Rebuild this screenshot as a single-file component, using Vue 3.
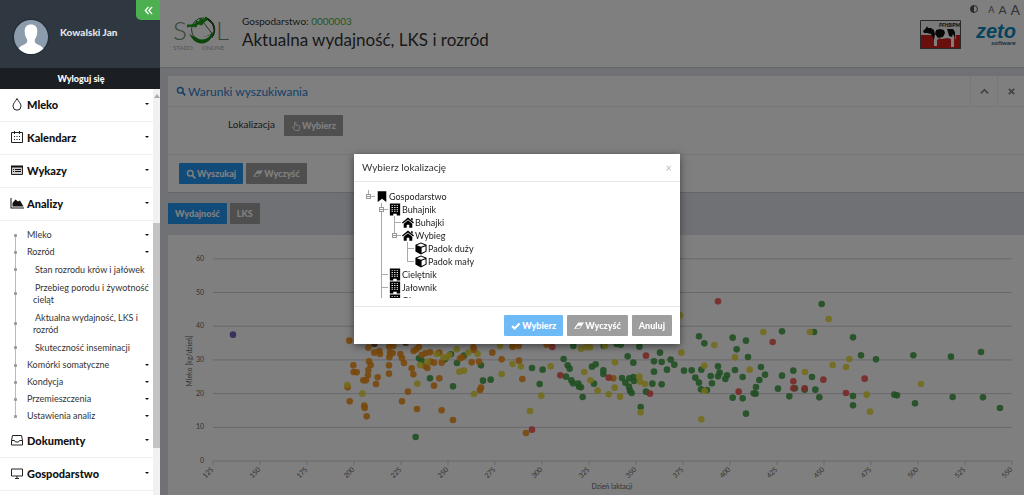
<script setup>
import { ref } from 'vue'

const mainMenu = [
  { label: 'Mleko', icon: 'drop' },
  { label: 'Kalendarz', icon: 'calendar' },
  { label: 'Wykazy', icon: 'list' },
  { label: 'Analizy', icon: 'area' }
]
const bottomMenu = [
  { label: 'Dokumenty', icon: 'inbox' },
  { label: 'Gospodarstwo', icon: 'screen' }
]
const subMenu = [
  { label: 'Mleko', caret: true },
  { label: 'Rozród', caret: true },
  { label: 'Stan rozrodu krów i jałówek', deep: true },
  { label: 'Przebieg porodu i żywotność cieląt', deep: true },
  { label: 'Aktualna wydajność, LKS i rozród', deep: true },
  { label: 'Skuteczność inseminacji', deep: true },
  { label: 'Komórki somatyczne', caret: true },
  { label: 'Kondycja', caret: true },
  { label: 'Przemieszczenia', caret: true },
  { label: 'Ustawienia analiz', caret: true }
]

const tree = [{
  label: 'Gospodarstwo', icon: 'bookmark', children: [
    { label: 'Buhajnik', icon: 'building', children: [
      { label: 'Buhajki', icon: 'home' },
      { label: 'Wybieg', icon: 'home', children: [
        { label: 'Padok duży', icon: 'cube' },
        { label: 'Padok mały', icon: 'cube' }
      ] }
    ] },
    { label: 'Cielętnik', icon: 'building' },
    { label: 'Jałownik', icon: 'building' },
    { label: 'Obora', icon: 'building' }
  ]
}]

// Turns the tree into rows; rails tell which ancestor lines pass through a row.
function flatten(nodes, rails = []) {
  return nodes.flatMap((n, i) => {
    const last = i === nodes.length - 1
    return [{ ...n, rails, last }, ...flatten(n.children || [], [...rails, !last])]
  })
}
const rows = flatten(tree)

const open = ref(true)
const yTicks = [60, 50, 40, 30, 20, 10, 0]
const xTicks = Array.from({ length: 18 }, (_, i) => 125 + i * 25)
const xPos = d => 213 + (d - 125) * 1.88
const yPos = v => 461 - v * 3.37

// Scatter series, stored per chart section in thirds of a chart unit.
const sections = [
  { x: 160, y: 230, purple: [[219, 314]] },
  { x: 340, y: 340,
    brown: [[103, 12], [197, 8]],
    green: [[237, 55], [245, 62], [270, 115], [339, 139], [333, 43], [315, 58], [351, 69], [372, 47], [423, 76], [429, 122], [452, 119], [227, 291]],
    orange: [[28, 2], [85, 23], [103, 38], [118, 33], [120, 42], [148, 20], [160, 18], [150, 38], [148, 52], [158, 40], [181, 42], [186, 55], [192, 69], [147, 76], [147, 101], [40, 76], [41, 96], [50, 97], [87, 64], [92, 75], [85, 90], [84, 106], [70, 121], [78, 121], [113, 112], [108, 132], [23, 142], [29, 184], [73, 197], [74, 204], [80, 229], [186, 184], [204, 155], [215, 85], [220, 103], [221, 33], [229, 28], [237, 21], [245, 45], [256, 40], [270, 37], [298, 38], [255, 78], [262, 84], [272, 65], [282, 68], [305, 68], [298, 115], [282, 137], [231, 207], [305, 211], [339, 240], [360, 55], [366, 52], [395, 67], [417, 65], [400, 22], [402, 30], [457, 38], [485, 58], [420, 150], [423, 143], [518, 20]],
    yellow: [[22, 135], [67, 161], [232, 131], [290, 42], [310, 52], [320, 52], [328, 45], [350, 28], [385, 38], [413, 42], [358, 95], [372, 92], [402, 162], [485, 102], [480, 18], [240, 75], [262, 65]] },
  { x: 510, y: 340,
    orange: [[8, 20], [26, 18], [27, 62], [37, 117], [48, 279], [110, 14], [310, 115]],
    green: [[66, 84], [98, 89], [89, 132], [190, 18], [161, 57], [173, 76], [179, 86], [168, 110], [184, 121], [189, 130], [205, 131], [207, 140], [213, 142], [218, 171], [246, 80], [257, 73], [252, 131], [280, 91], [280, 102], [281, 18], [320, 12], [332, 14], [388, 20], [353, 49], [370, 68], [336, 114], [346, 128], [358, 115], [370, 111], [372, 123], [357, 140], [360, 152], [365, 159], [392, 201], [408, 155], [432, 64], [455, 66], [450, 38], [482, 59], [493, 74], [471, 89], [432, 95], [427, 131], [455, 133]],
    yellow: [[8, 72], [33, 79], [60, 213], [94, 167], [122, 79], [213, 26], [228, 22], [240, 22], [285, 18], [223, 96], [241, 121], [263, 152], [296, 163], [314, 143], [330, 170], [315, 67], [388, 110], [390, 125], [405, 132], [392, 217]],
    red: [[66, 269], [127, 21], [151, 106], [296, 113], [408, 47], [420, 161]] },
  { x: 680, y: 280,
    green: [[425, 72], [57, 169], [73, 190], [158, 173], [198, 182], [170, 208], [204, 231], [306, 154], [402, 156], [12, 272], [35, 271], [64, 269], [46, 293], [57, 308], [63, 328], [81, 330], [92, 288], [96, 310], [114, 259], [119, 278], [114, 289], [141, 286], [136, 297], [165, 270], [188, 291], [158, 353], [188, 355], [198, 401], [228, 321], [221, 340], [227, 341], [238, 300], [255, 284], [243, 261], [306, 287], [340, 272], [294, 326], [328, 349], [396, 291], [406, 329], [418, 352], [374, 329], [345, 325]],
    red: [[114, 64], [278, 186], [340, 304], [340, 325], [374, 325], [430, 299], [498, 339], [176, 335]],
    yellow: [[446, 117], [250, 156], [390, 156], [103, 195], [165, 232], [73, 257], [209, 269], [375, 276], [458, 255], [508, 237], [498, 261], [74, 333], [64, 418], [4, 218], [0, 106]] },
  { x: 850, y: 280,
    green: [[9, 172], [33, 226], [78, 238], [190, 226], [303, 230], [393, 216], [9, 348], [9, 376], [133, 344], [141, 346], [195, 370], [308, 351], [399, 352], [450, 384]],
    red: [[44, 296]],
    yellow: [[213, 312], [50, 344], [60, 395]] }
]
const points = sections.flatMap(s =>
  ['brown', 'purple', 'green', 'orange', 'yellow', 'red'].flatMap(c =>
    (s[c] || []).map(([px, py]) => ({ c, x: s.x + px / 3, y: s.y + py / 3 }))
  )
)
</script>

<template>
  <div class="app">
    <aside class="sidebar">
      <header class="profile">
        <svg class="avatar" viewBox="0 0 38 38" aria-hidden="true">
          <circle cx="19" cy="19" r="18.500" fill="#27303a" />
          <clipPath id="face"><circle cx="19" cy="19" r="17" /></clipPath>
          <g clip-path="url(#face)">
            <rect width="38" height="38" fill="#8c9cac" />
            <path fill="#fff" d="M19 6.500c4.500 0 6.600 3 6.300 7.500-.2 4-1.500 6-2.500 7.500-.3 3 .5 4 3 5 4 1.500 5.500 3 6.200 5.500V38H6v-6c.7-2.500 2.200-4 6.200-5.500 2.500-1 3.300-2 3-5-1-1.500-2.300-3.500-2.500-7.500-.3-4.500 1.800-7.500 6.300-7.500z" />
          </g>
        </svg>
        <span class="user">Kowalski Jan</span>
        <button class="collapse" type="button" aria-label="Zwiń menu">
          <svg viewBox="0 0 10 10" aria-hidden="true"><path d="M5 1 1.500 5 5 9M9 1 5.500 5 9 9" fill="none" stroke="#fff" stroke-width="1.500" /></svg>
        </button>
      </header>
      <button class="logout" type="button">Wyloguj się</button>
      <div class="menu-area">
        <nav class="menu">
          <template v-for="(group, g) in [mainMenu, bottomMenu]" :key="g">
            <a v-for="item in group" :key="item.label" href="#" class="menu-item">
              <svg class="menu-icon" viewBox="0 0 14 14" aria-hidden="true">
                <path v-if="item.icon === 'drop'" class="line" d="M7 1.500C5.500 4.500 3 6.500 3 9.200a4 4 0 0 0 8 0C11 6.500 8.500 4.500 7 1.500z" />
                <g v-else-if="item.icon === 'calendar'">
                  <path class="line" d="M1.500 2.500h11v10h-11zM4.500 1v3M9.500 1v3" />
                  <path d="M4 6h1v1H4zM6.500 6h1v1h-1zM9 6h1v1H9zM4 9h1v1H4zM6.500 9h1v1h-1zM9 9h1v1H9z" />
                </g>
                <g v-else-if="item.icon === 'list'">
                  <path fill="#ccc" stroke="#222" d="M1.500 3.500h11v8h-11z" />
                  <path d="M1 2.500h12v2H1zM3 6h1v1H3zM5 6h6v1H5zM3 8h1v1H3zM5 8h6v1H5z" />
                </g>
                <path v-else-if="item.icon === 'area'" d="M.5 2h1v9.500H14v1H.5zM2.500 10.500V7L5.500 3.500l2.500 2 2-1 3.500 6z" />
                <path v-else-if="item.icon === 'inbox'" class="line" d="M1.500 7.500l1-5h9l1 5v4.500h-11zM1.500 7.500h3l1 1.500h3l1-1.500h3" />
                <path v-else class="line" d="M1.500 3h11v7h-11zM5 12.500h4M7 10v2.500" />
              </svg>
              <span>{{ item.label }}</span>
              <i class="caret"></i>
            </a>
            <ul v-if="g === 0" class="submenu">
              <li v-for="sub in subMenu" :key="sub.label" :class="{ deep: sub.deep }">
                <a href="#">{{ sub.label }}</a>
                <i v-if="sub.caret" class="caret"></i>
              </li>
            </ul>
          </template>
        </nav>
        <div class="scrollbar"><i class="arrow"></i><i class="thumb"></i></div>
      </div>
    </aside>

    <main class="page">
      <header class="topbar">
        <svg class="logo" viewBox="0 0 56 36" aria-label="SOL Stado Online">
          <text x="0" y="25" font-size="26" fill="#6f8f6f" class="thin">S</text>
          <text x="43" y="25" font-size="26" fill="#6f8f6f" class="thin">L</text>
          <circle cx="30" cy="15" r="11.500" fill="none" stroke="#446644" />
          <path d="M32 3a12.500 12.500 0 0 1 7 20 14 14 0 0 0 0-14z" fill="#2c4c2c" stroke="#2c4c2c" />
          <path d="M16 19c6 6 17 5 25-2-2 7-6 12-12 12s-10-4-13-10z" fill="#158a15" />
          <path d="M20 20c5 3 12 3 18 0-3 4-6 5-9 5s-6-2-9-5z" fill="#fff" />
          <path d="M14 10h4l4-1 1-3 3 1 1-4 3 2 4-3v4l-3 2-2 3-4-1-2 3-4-1-5 1z" fill="#18a018" />
          <path d="M29 6l10 13" stroke="#446644" fill="none" />
          <text x="0" y="35" font-size="6" fill="#aaa">STADO</text>
          <text x="29" y="35" font-size="6" fill="#aaa">ONLINE</text>
        </svg>
        <div class="heading">
          <p>Gospodarstwo: <a href="#">0000003</a></p>
          <h1>Aktualna wydajność, LKS i rozród</h1>
        </div>
        <div class="tools">
          <div class="sizes">
            <svg viewBox="0 0 10 10" aria-label="Kontrast"><circle cx="5" cy="5" r="3.500" fill="none" stroke="#555" /><path d="M5 1.500a3.500 3.500 0 0 0 0 7z" fill="#555" /></svg>
            <button type="button" class="s1">A</button><button type="button" class="s2">A</button><button type="button" class="s3">A</button>
          </div>
          <div class="brands">
            <svg class="cow" viewBox="0 0 41 29" aria-label="PFHBiPM">
              <path d="M0 0h41v15H0z" fill="#f4f4f4" /><path d="M0 15h41v14H0z" fill="#d3201f" />
              <path d="M3 10l4-3 3 1 4 1h18l3 2 1 9-2-4v11h-3V19l-3-1-7 1-1-1-3 2v6h-3v-8l-3-5-4-1-3-1z" fill="#fff" />
              <path d="M3 11l3-3 1-2 1 2 3 0 3 2 1 4-1 6-3-6-4-1-3 0zM16 10l4-1 4 1 1 3-2 4-5 1-3-4zM27 9h6l2 3v6l-2-4-1 3-3-1-1-4z" fill="#111" />
              <path d="M.5.500h40v28H.5z" fill="none" stroke="#555" />
              <text x="19" y="7" font-size="5" fill="#222" font-weight="900" font-style="italic">PFHBiPM</text>
            </svg>
            <svg class="zeto" viewBox="0 0 45 28" aria-label="zeto software">
              <text x="1" y="18" font-size="20" fill="#0d88bd">zeto</text>
              <text x="16" y="25" font-size="6" fill="#0d6c98">software</text>
            </svg>
          </div>
        </div>
      </header>

      <div class="content">
        <section class="panel">
          <header class="panel-head">
            <h2>
              <svg viewBox="0 0 14 14" aria-hidden="true"><circle cx="6" cy="6" r="4" fill="none" stroke="currentColor" stroke-width="2" /><path d="M9 9l4 4" stroke="currentColor" stroke-width="2.500" /></svg>
              Warunki wyszukiwania
            </h2>
            <button type="button" aria-label="Zwiń"><svg viewBox="0 0 10 10"><path d="M1 7l4-4 4 4" fill="none" stroke="#888" stroke-width="2" /></svg></button>
            <button type="button" aria-label="Zamknij"><svg viewBox="0 0 10 10"><path d="M2 2l6 6M8 2 2 8" stroke="#888" stroke-width="2" /></svg></button>
          </header>
          <div class="panel-body">
            <label for="loc">Lokalizacja</label>
            <button id="loc" type="button" class="btn">
              <svg viewBox="0 0 14 14" aria-hidden="true"><path d="M5 8V2.500a1 1 0 0 1 2 0V6l4 .5q1.500.3 1.300 2L11.500 12v1.200h-6L2 8.800q.8-1.500 3 .8" fill="none" stroke="currentColor" stroke-width="1.200" /></svg>
              Wybierz
            </button>
          </div>
          <footer class="panel-foot">
            <button type="button" class="btn blue"><svg viewBox="0 0 14 14" aria-hidden="true"><circle cx="6" cy="6" r="4" fill="none" stroke="currentColor" stroke-width="2" /><path d="M9 9l4 4" stroke="currentColor" stroke-width="2.500" /></svg>Wyszukaj</button>
            <button type="button" class="btn"><svg viewBox="0 0 14 14" aria-hidden="true"><path fill="currentColor" fill-rule="evenodd" d="M6 2h8l-6 9H0zM5 6.500 2.500 10h5L10 6.500z" /></svg>Wyczyść</button>
          </footer>
        </section>

        <div class="tabs">
          <button type="button" class="btn blue">Wydajność</button>
          <button type="button" class="btn">LKS</button>
        </div>

        <section class="chart-card">
          <svg class="chart" viewBox="168 235 856 260" role="img" aria-label="Mleko w zależności od dnia laktacji">
            <g v-for="v in yTicks" :key="v">
              <line x1="213" x2="1012" :y1="yPos(v)" :y2="yPos(v)" class="grid" />
              <text x="204" :y="yPos(v) + 2" text-anchor="end">{{ v }}</text>
            </g>
            <g v-for="d in xTicks" :key="d">
              <line :x1="xPos(d)" :x2="xPos(d)" y1="461" y2="465" class="grid" />
              <text :transform="`translate(${xPos(d) + 1} 470) rotate(-45)`" text-anchor="end">{{ d }}</text>
            </g>
            <text transform="translate(192 361) rotate(-90)" text-anchor="middle">Mleko [kg/dzień]</text>
            <text x="612" y="489" text-anchor="middle">Dzień laktacji</text>
            <circle v-for="(p, i) in points" :key="i" :cx="p.x" :cy="p.y" r="3.300" :class="p.c" />
          </svg>
        </section>
      </div>
    </main>

    <div v-if="open" class="backdrop"></div>
    <div v-if="open" class="modal-wrap">
      <div class="modal" role="dialog" aria-labelledby="dlg">
        <header class="modal-head">
          <h3 id="dlg">Wybierz lokalizację</h3>
          <button type="button" class="close" aria-label="Zamknij" @click="open = false">×</button>
        </header>
        <div class="modal-body">
          <ul class="tree">
            <li v-for="row in rows" :key="row.label" class="node">
              <i v-for="(rail, r) in row.rails" :key="r" class="cell" :class="{ rail: rail }"></i>
              <span class="cell joint" :class="row.last ? 'half' : 'rail'">
                <button v-if="row.children" class="expander" type="button" aria-label="Zwiń"></button>
              </span>
              <svg class="node-icon" viewBox="0 0 14 14" aria-hidden="true">
                <path v-if="row.icon === 'bookmark'" d="M2 1h10v12.500L7 9.500 2 13.500z" />
                <path v-else-if="row.icon === 'building'" fill-rule="evenodd" d="M1 0h12v14H9v-2H5v2H1zM3 2v1h1.500V2zM6 2v1h1.500V2zM9 2v1h1.500V2zM3 4.200v1h1.500v-1zM6 4.200v1h1.500v-1zM9 4.200v1h1.500v-1zM3 6.400v1h1.500v-1zM6 6.400v1h1.500v-1zM9 6.400v1h1.500v-1zM3 8.600v1h1.500v-1zM6 8.600v1h1.500v-1zM9 8.600v1h1.500v-1z" />
                <path v-else-if="row.icon === 'home'" d="M7 1.200 14 7l-1 1.200L7 3.400 1 8.200 0 7zM10.500 2h2v3l-2-1.600zM7 4.400l5 4V13H8.500V9.500h-3V13H2V8.400z" />
                <path v-else fill-rule="evenodd" d="M7 0l6.500 2.600v8L7 14 .5 10.600v-8zM7 1.200 2.200 3.100 7 5l4.800-1.900zM7.700 6.200v6l4.600-2.300V4.400z" />
              </svg>
              <span>{{ row.label }}</span>
            </li>
          </ul>
        </div>
        <footer class="modal-foot">
          <button type="button" class="btn blue" disabled><svg viewBox="0 0 14 14" aria-hidden="true"><path d="M1.500 7 5 10.500 12 3.500" fill="none" stroke="currentColor" stroke-width="3" /></svg>Wybierz</button>
          <button type="button" class="btn"><svg viewBox="0 0 14 14" aria-hidden="true"><path fill="currentColor" fill-rule="evenodd" d="M6 2h8l-6 9H0zM5 6.500 2.500 10h5L10 6.500z" /></svg>Wyczyść</button>
          <button type="button" class="btn" @click="open = false">Anuluj</button>
        </footer>
      </div>
    </div>
  </div>
</template>

<style>
body { margin: 0; overflow: hidden; }
</style>

<style scoped>
.app { display: grid; grid-template-columns: 160px 1fr; height: 100vh; font: 10px/13px Lato, "Liberation Sans", sans-serif; color: #333; }
.app *, .app { box-sizing: border-box; }
button { font: inherit; border: 0; background: none; padding: 0; margin: 0; cursor: pointer; color: inherit; }
ul { list-style: none; margin: 0; padding: 0; }
a { color: inherit; text-decoration: none; }
h1, h2, h3, p { margin: 0; font-weight: 400; }

.sidebar { position: relative; z-index: 3; display: flex; flex-direction: column; height: 100vh; background: #fff; }
.profile { position: relative; display: flex; align-items: center; gap: 10px; height: 68px; flex: none; padding: 6px 0 0 12px; background: #2f3740; color: #fff; }
.avatar { width: 38px; height: 38px; }
.user { font-size: 10px; font-weight: 900; padding-bottom: 10px; color: #e0e4e8; }
.collapse { position: absolute; top: 0; right: 0; width: 24px; height: 20px; background: #4caf50; border-radius: 0 0 0 5px; }
.collapse svg { width: 9px; height: 9px; display: block; margin: 0 auto; }
.logout { height: 21px; flex: none; background: #1b1e23; color: #fff; font-size: 9px; font-weight: 900; padding-left: 2px; }
.menu-area { display: flex; flex: 1; min-height: 0; }
.menu { flex: 1; overflow: hidden; }
.menu-item { display: flex; align-items: center; gap: 3px; height: 33px; padding: 0 4px 2px 10px; border-bottom: 1px solid #f0f0f0; font-size: 11px; font-weight: 900; color: #111; }
.menu-icon { width: 14px; height: 14px; fill: #111; }
.line { fill: none; stroke: #222; stroke-width: 1; }
.caret { margin-left: auto; border: 2px solid transparent; border-top-color: #111; border-bottom: 0; }
.submenu { padding: 6px 0 0; }
.submenu li { position: relative; display: flex; align-items: center; padding: 2px 4px 3px 27px; font-size: 9px; line-height: 12px; color: #333; }
.submenu li.deep { padding: 3px 2px 3px 33px; text-indent: 2px; }
.submenu li::before { content: ""; position: absolute; left: 15px; top: 0; bottom: 0; width: 1px; background: #bbb; }
.submenu li:first-child::before { top: 50%; }
.submenu li:last-child::before { bottom: 50%; }
.submenu li::after { content: ""; position: absolute; left: 14px; top: 50%; width: 3px; height: 3px; margin-top: -2px; background: #999; border-radius: 1px; }
.scrollbar { width: 7px; background: #f1f1f1; display: flex; flex-direction: column; align-items: center; padding-top: 5px; }
.arrow { border: 3px solid transparent; border-bottom: 4px solid #aaa; border-top: 0; }
.thumb { width: 7px; height: 56%; margin-top: 125px; background: #c4c4c4; }

.page { display: flex; flex-direction: column; min-width: 0; height: 100vh; overflow: hidden; background: #dfe3eb; }
.topbar { display: flex; height: 68px; flex: none; padding-left: 13px; background: #fff; border-bottom: 1px solid #c8ccd6; }
.logo { width: 56px; height: 37px; margin-top: 14px; }
.thin { font-weight: 300; }
.heading { flex: 1; padding: 15px 0 0 13px; }
.heading p { font-size: 10px; line-height: 13px; }
.heading a { color: #4caf50; }
.heading h1 { font-size: 17px; line-height: 24px; color: #333; }
.tools { display: flex; flex-direction: column; align-items: flex-end; padding: 2px 4px 0 0; }
.sizes { display: flex; align-items: center; gap: 4px; height: 14px; color: #666; }
.sizes svg { width: 10px; height: 10px; margin-right: 5px; }
.s1 { font-size: 9px; } .s2 { font-size: 12px; } .s3 { font-size: 14px; }
.brands { display: flex; gap: 14px; padding-top: 4px; }
.cow { width: 41px; height: 29px; }
.zeto { width: 45px; height: 28px; font-family: "Liberation Sans", Arial, sans-serif; font-weight: 700; font-style: italic; }

.content { padding: 8px 0 0 8px; }
.panel { background: #fff; border-bottom: 1px solid #c8ccd6; }
.panel-head { display: flex; height: 31px; border-bottom: 1px solid #eee; }
.panel-head h2 { display: flex; align-items: center; gap: 2px; flex: 1; padding-left: 8px; font-size: 12px; color: #2b7fd0; }
.panel-head h2 svg { width: 10px; height: 10px; }
.panel-head button { width: 27px; border-left: 1px solid #eee; }
.panel-head button svg { width: 9px; height: 9px; display: block; margin: 0 auto; }
.panel-body { display: flex; gap: 9px; height: 47px; padding: 8px 0 0 60px; }
.panel-body label { line-height: 19px; }
.panel-foot { display: flex; gap: 3px; padding: 8px 11px; border-top: 1px solid #eee; }
.btn { display: inline-flex; align-items: center; gap: 1px; height: 21px; padding: 0 7px; background: #9e9e9e; color: #fff; font-size: 9px; font-weight: 900; border-radius: 1px; }
.btn svg { width: 10px; height: 10px; }
.btn.blue { background: #2196f3; }
.btn:disabled { opacity: .65; }
.tabs { display: flex; gap: 3px; padding: 10px 0 11px; }
.chart-card { background: #fff; }
.chart { display: block; width: 100%; font-size: 7px; fill: #666; }
.grid { stroke: #d0d0d8; stroke-width: 1; }
.green { fill: #43a047; } .orange { fill: #f39219; } .yellow { fill: #e6d83c; } .red { fill: #ef5350; } .purple { fill: #6f66c0; } .brown { fill: #8a5a30; }
circle.green, circle.orange, circle.yellow, circle.red { fill-opacity: .9; }

.backdrop { position: fixed; inset: 0; z-index: 2; background: rgba(0, 0, 0, .5); }
.modal-wrap { position: fixed; inset: 0; z-index: 4; display: flex; align-items: center; justify-content: center; padding: 3px 0 0 10px; }
.modal { width: 326px; background: #fff; box-shadow: 0 2px 8px rgba(0, 0, 0, .5); }
.modal-head { display: flex; align-items: center; justify-content: space-between; height: 28px; padding: 0 8px; border-bottom: 1px solid #e8e8e8; }
.modal-head h3 { font-size: 10px; }
.close { color: #bbb; font-size: 11px; }
.modal-body { height: 124px; padding: 8px; }
.tree { height: 108px; overflow: hidden; font-size: 9px; }
.node { display: flex; align-items: center; height: 13px; color: #222; }
.node-icon { width: 12px; height: 13px; margin: 0 1px; fill: #000; }
.cell { position: relative; width: 13px; height: 13px; }
.rail::before, .half::before { content: ""; position: absolute; left: 6px; top: 0; width: 1px; height: 13px; background: #aaa; }
.half::before { height: 7px; }
.joint::after { content: ""; position: absolute; left: 6px; top: 6px; width: 7px; height: 1px; background: #aaa; }
.expander { position: absolute; z-index: 1; left: 4px; top: 4px; width: 5px; height: 5px; border: 1px solid #999; background: linear-gradient(#999, #999) center / 3px 1px no-repeat #fff; }
.modal-foot { display: flex; justify-content: flex-end; gap: 4px; padding: 8px; border-top: 1px solid #e8e8e8; }
</style>
